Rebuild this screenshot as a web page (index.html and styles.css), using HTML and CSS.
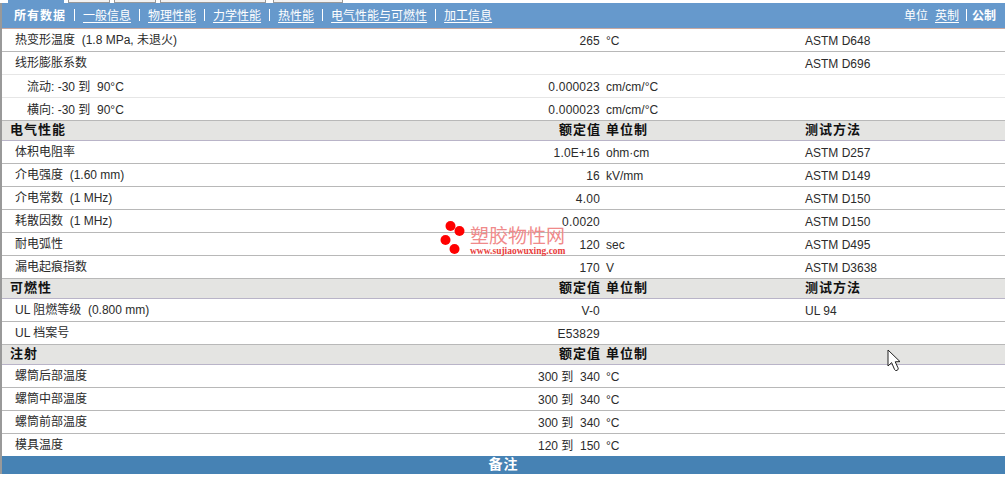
FILE: index.html
```html
<!DOCTYPE html>
<html lang="zh">
<head>
<meta charset="utf-8">
<title>塑胶物性</title>
<link rel="stylesheet" href="styles.css">
</head>
<body>
<div class="tabs">
  <span class="tab tab-a"></span><span class="tab tab-b"></span><span class="tab tab-c"></span><span class="tab tab-d"></span><span class="tab tab-e"></span>
</div>
<main class="sheet">
  <nav class="bar">
    <div class="nav">
      <b>所有数据</b><i></i><a href="#">一般信息</a><i></i><a href="#">物理性能</a><i></i><a href="#">力学性能</a><i></i><a href="#">热性能</a><i></i><a href="#">电气性能与可燃性</a><i></i><a href="#">加工信息</a>
    </div>
    <div class="units">
      <span>单位</span><a href="#">英制</a><i></i><b>公制</b>
    </div>
  </nav>

  <div class="row"><span class="name">热变形温度&nbsp;&nbsp;(1.8 MPa, 未退火)</span><span class="val">265</span><span class="unit">°C</span><span>ASTM D648</span></div>
  <div class="row soft"><span class="name">线形膨胀系数</span><span class="val"></span><span class="unit"></span><span>ASTM D696</span></div>
  <div class="row soft"><span class="name sub">流动: -30 到&nbsp;&nbsp;90°C</span><span class="val">0.000023</span><span class="unit">cm/cm/°C</span><span></span></div>
  <div class="row"><span class="name sub">横向: -30 到&nbsp;&nbsp;90°C</span><span class="val">0.000023</span><span class="unit">cm/cm/°C</span><span></span></div>

  <div class="row head"><span class="name">电气性能</span><span class="val">额定值</span><span class="unit">单位制</span><span>测试方法</span></div>
  <div class="row"><span class="name">体积电阻率</span><span class="val">1.0E+16</span><span class="unit">ohm·cm</span><span>ASTM D257</span></div>
  <div class="row"><span class="name">介电强度&nbsp;&nbsp;(1.60 mm)</span><span class="val">16</span><span class="unit">kV/mm</span><span>ASTM D149</span></div>
  <div class="row"><span class="name">介电常数&nbsp;&nbsp;(1 MHz)</span><span class="val">4.00</span><span class="unit"></span><span>ASTM D150</span></div>
  <div class="row"><span class="name">耗散因数&nbsp;&nbsp;(1 MHz)</span><span class="val">0.0020</span><span class="unit"></span><span>ASTM D150</span></div>
  <div class="row"><span class="name">耐电弧性</span><span class="val">120</span><span class="unit">sec</span><span>ASTM D495</span></div>
  <div class="row"><span class="name">漏电起痕指数</span><span class="val">170</span><span class="unit">V</span><span>ASTM D3638</span></div>

  <div class="row head"><span class="name">可燃性</span><span class="val">额定值</span><span class="unit">单位制</span><span>测试方法</span></div>
  <div class="row"><span class="name">UL 阻燃等级&nbsp;&nbsp;(0.800 mm)</span><span class="val">V-0</span><span class="unit"></span><span>UL 94</span></div>
  <div class="row"><span class="name">UL 档案号</span><span class="val">E53829</span><span class="unit"></span><span></span></div>

  <div class="row head"><span class="name">注射</span><span class="val">额定值</span><span class="unit">单位制</span><span></span></div>
  <div class="row"><span class="name">螺筒后部温度</span><span class="val range">300 到&nbsp;&nbsp;340</span><span class="unit">°C</span><span></span></div>
  <div class="row"><span class="name">螺筒中部温度</span><span class="val range">300 到&nbsp;&nbsp;340</span><span class="unit">°C</span><span></span></div>
  <div class="row"><span class="name">螺筒前部温度</span><span class="val range">300 到&nbsp;&nbsp;340</span><span class="unit">°C</span><span></span></div>
  <div class="row last"><span class="name">模具温度</span><span class="val range">120 到&nbsp;&nbsp;150</span><span class="unit">°C</span><span></span></div>

  <div class="notes">备注</div>
</main>

<div class="logo">
  <svg class="logo-dots" width="30" height="36" viewBox="0 0 30 36" aria-hidden="true">
    <circle cx="10.5" cy="6" r="5"/><circle cx="19.5" cy="11" r="5"/><circle cx="5.5" cy="20" r="5"/><circle cx="14.5" cy="29" r="5"/>
  </svg>
  <div class="logo-text">
    <span class="logo-cn">塑胶物性网</span>
    <span class="logo-en">www.sujiaowuxing.com</span>
  </div>
</div>

<svg class="cursor" width="14" height="23" viewBox="0 0 14 23" aria-hidden="true">
  <path d="M1 1 L1 17 L4.6 13.6 L7.6 20.6 Q8.4 22 10 21.4 L10.8 20.8 Q11.6 20 11 18.8 L8.2 12.8 L13 12.6 Z" fill="#fff" stroke="#222" stroke-width="1"/>
</svg>
</body>
</html>
```
FILE: styles.css
```css
* { box-sizing: border-box; }
html, body { margin: 0; padding: 0; }
body {
  width: 1005px;
  height: 477px;
  overflow: hidden;
  background: #fff;
  font-family: "Liberation Sans", "Noto Sans CJK SC", sans-serif;
  font-size: 12px;
  color: #2b2b2b;
  position: relative;
}
.tabs { display: flex; height: 3px; align-items: flex-start; }
.tab { display: block; height: 3px; border: 1px solid #999; border-top: 0; background: #f2f2f2; }
.tab-a { width: 56px; margin-left: 8px; background: #6699cc; border-color: #6699cc; }
.tab-b { width: 42px; margin-left: 4px; }
.tab-c { width: 42px; margin-left: 4px; }
.tab-d { width: 106px; margin-left: 4px; }
.tab-e { width: 70px; margin-left: 7px; }

.sheet { border-left: 2px solid #999; width: 1005px; }

.bar {
  height: 26px;
  background: #6699cc;
  color: #fff;
  display: flex;
  justify-content: space-between;
  align-items: center;
  padding: 0 9px 2px 12px;
  border-bottom: 1px solid #c9a9a0;
}
.bar a { color: #fff; text-decoration: underline; text-underline-offset: 2px; }
.bar b { font-size: 12px; letter-spacing: 1px; }
.nav { display: flex; align-items: center; gap: 8px; }
.nav i, .units i { display: block; width: 1px; height: 12px; background: #fff; }
.units { display: flex; align-items: center; gap: 7px; }
.units b { margin-left: -2px; letter-spacing: 0; }

.row {
  display: grid;
  grid-template-columns: 340px 258px 205px 1fr;
  align-items: center;
  height: 23px;
  border-bottom: 1px solid #b8b8b8;
  padding-top: 1px;
}
.row.soft { border-bottom-color: #e6e6e6; }
.row.last { border-bottom: 0; height: 22px; }
.name { padding-left: 13px; white-space: nowrap; margin-bottom: 4px; }
.name.sub { padding-left: 25px; margin-bottom: 2px; }
.val { text-align: right; white-space: nowrap; letter-spacing: .2px; }
.val.range { letter-spacing: 0; margin-bottom: 2px; }
.unit { padding-left: 6px; }

.head {
  height: 20px;
  padding-top: 0;
  padding-bottom: 2px;
  line-height: 14px;
  background: #e4e4e2;
  color: #111;
  font-weight: 700;
  font-size: 13px;
  letter-spacing: 1px;
  border-bottom-color: #b9b4c8;
}
.head .name { padding-left: 8px; margin-bottom: 0; }
.head .val { margin-right: -1px; letter-spacing: 1px; }

.notes {
  height: 18px;
  line-height: 16px;
  background: #4682b4;
  color: #fff;
  font-weight: 700;
  font-size: 14px;
  letter-spacing: 1px;
  text-align: center;
}

.logo {
  position: absolute;
  left: 440px;
  top: 220px;
  display: flex;
}
.logo-dots { fill: #f00; display: block; }
.logo-text { display: flex; flex-direction: column; margin-top: 7px; }
.logo-cn {
  font-size: 19px;
  line-height: 19px;
  font-weight: 400;
  color: #f08a8a;
  white-space: nowrap;
}
.logo-en {
  font-family: "Liberation Serif", serif;
  font-size: 9.5px;
  font-weight: 700;
  line-height: 9px;
  color: #e8403c;
  white-space: nowrap;
  margin-top: 1px;
}

.cursor { position: absolute; left: 887px; top: 349px; }
```
